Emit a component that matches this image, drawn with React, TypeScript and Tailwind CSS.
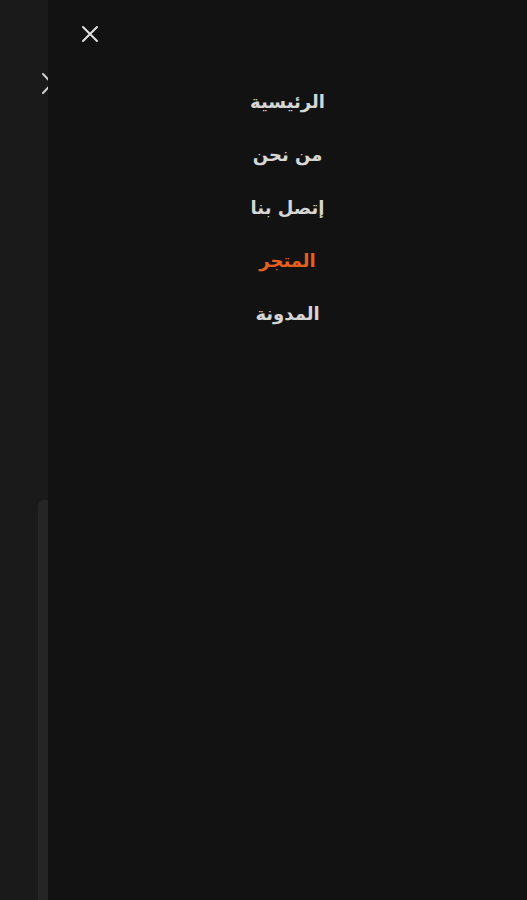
import React from "react"

const links = [
  { label: "الرئيسية", active: false },
  { label: "من نحن", active: false },
  { label: "إتصل بنا", active: false },
  { label: "المتجر", active: true },
  { label: "المدونة", active: false },
]

export default function App() {
  return (
    <div className="relative h-[900px] w-[527px] overflow-hidden bg-[#1a1a1a] font-['DejaVu_Sans',sans-serif]">
      {/* page behind the drawer: its own close icon, mostly covered */}
      <svg
        className="absolute left-[40px] top-[72px] text-[#d0d0d0]"
        width="20"
        height="22"
        viewBox="0 0 20 22"
        fill="none"
        stroke="currentColor"
        strokeWidth="2"
        strokeLinecap="round"
      >
        <path d="M3 2l9 9.5M3 21l9-9.5" />
      </svg>
      <div className="absolute left-[38px] top-[500px] h-[420px] w-[12px] rounded-tl-[6px] bg-[#252525]" />

      {/* drawer */}
      <aside className="absolute inset-y-0 left-[48px] right-0 bg-[#121212]" dir="rtl">
        <button className="absolute left-[32px] top-[24px] text-[#e0e0e0]" aria-label="close">
          <svg width="20" height="20" viewBox="0 0 20 20" fill="none" stroke="currentColor" strokeWidth="2" strokeLinecap="round">
            <path d="M3 3l14 14M17 3L3 17" />
          </svg>
        </button>
        <nav className="flex flex-col items-center gap-[25px] pt-[88px]">
          {links.map((l) => (
            <a
              key={l.label}
              className={`text-[18px] font-bold leading-[28px] ${l.active ? "text-[#e3601e]" : "text-[#d6d6d6]"}`}
            >
              {l.label}
            </a>
          ))}
        </nav>
      </aside>
    </div>
  )
}
